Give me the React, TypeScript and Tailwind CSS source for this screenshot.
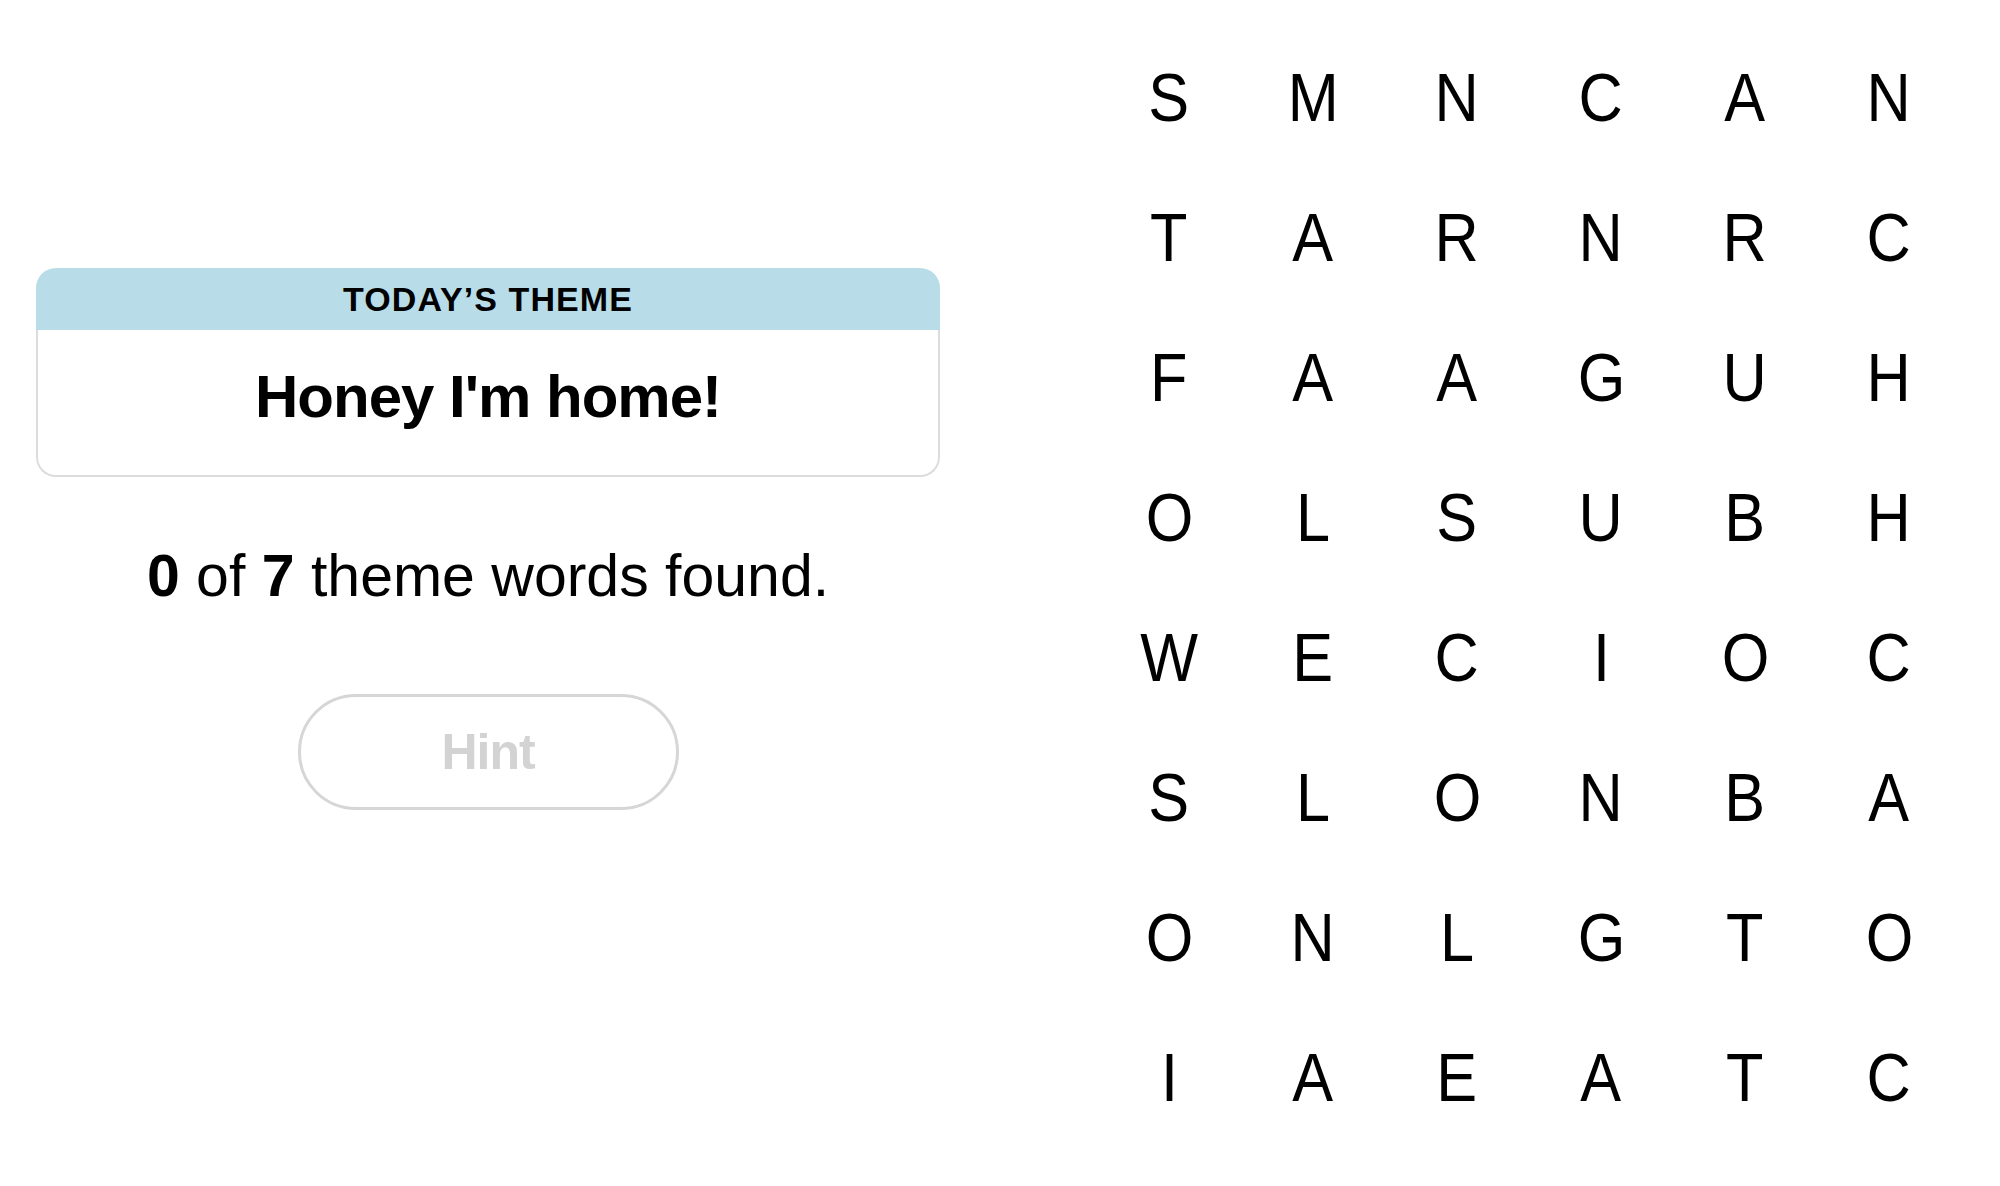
import React from 'react';

const rows: string[] = [
    'SMNCAN',
    'TARNRC',
    'FAAGUH',
    'OLSUBH',
    'WECIOC',
    'SLONBA',
    'ONLGTO',
    'IAEATC',
];

export default function App() {
    return (
        <div className="flex w-[2000px] h-[1186px] bg-white text-black font-['Liberation_Sans',Arial,sans-serif]">
            {/* Left side: theme card, progress and hint */}
            <div className="flex flex-col items-center w-[904px] ml-[36px] pt-[268px] shrink-0">
                <div className="w-full">
                    <div className="h-[62px] bg-[#b8dde9] rounded-t-[20px] flex items-center justify-center">
                        <span className="text-[34px] leading-none font-bold tracking-[1.1px]">TODAY’S THEME</span>
                    </div>
                    <div className="h-[147px] border-2 border-t-0 border-[#dcdcdc] rounded-b-[20px] flex items-center justify-center pb-[12px]">
                        <span className="text-[60px] leading-[60px] font-bold tracking-[-1px]">Honey I'm home!</span>
                    </div>
                </div>

                <p className="mt-[69px] text-[59px] leading-[60px]">
                    <span className="font-bold">0</span> of <span className="font-bold">7</span> theme words found.
                </p>

                <button className="mt-[88px] w-[381px] h-[116px] rounded-full border-[3px] border-[#d6d6d6] text-[#d3d3d3] text-[50px] leading-none font-bold tracking-[-1px] flex items-center justify-center">
                    Hint
                </button>
            </div>

            {/* Right side: letter grid */}
            <div className="ml-[157px] pt-[27px]">
                <div className="grid grid-cols-[repeat(6,144px)] auto-rows-[140px]">
                    {rows.map((row, r) =>
                        row.split('').map((ch, c) => (
                            <div key={`${r}-${c}`} className="flex items-center justify-center text-[68px] leading-none">
                                <span className="inline-block scale-x-90">{ch}</span>
                            </div>
                        ))
                    )}
                </div>
            </div>
        </div>
    );
}
